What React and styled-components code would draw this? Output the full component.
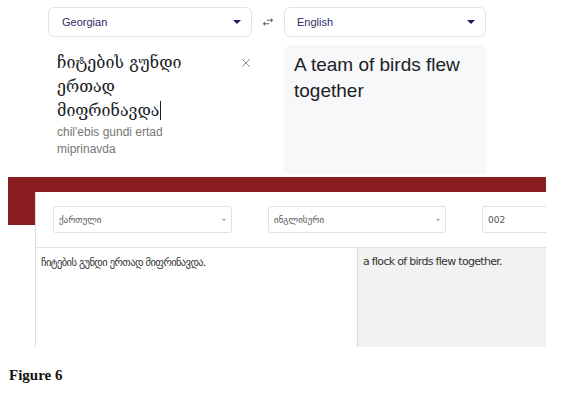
import React from "react";
import styled, { createGlobalStyle } from "styled-components";
import { X } from "lucide-react";

const GlobalStyle = createGlobalStyle`
  html, body {
    margin: 0;
    background: #ffffff;
  }
  body {
    padding: 7px 8px 8px;
    font-family: "Liberation Sans", Arial, sans-serif;
  }
`;

const Translator = styled.div`
  margin-left: 40px;
  width: 438px;
`;

const LangRow = styled.div`
  display: grid;
  grid-template-columns: 204px 32px 202px;
  align-items: center;
  height: 30px;
`;

const LangBox = styled.div`
  height: 30px;
  box-sizing: border-box;
  border: 1px solid #e3e4e8;
  border-radius: 6px;
  display: flex;
  align-items: center;
  justify-content: space-between;
  padding: 0 10px 0 ${({ $pad }) => $pad}px;
  font-size: 11px;
  color: #2f2b6c;
`;

const Caret = styled.span`
  width: 0;
  height: 0;
  border-left: ${({ $size }) => $size || 4}px solid transparent;
  border-right: ${({ $size }) => $size || 4}px solid transparent;
  border-top: ${({ $size }) => $size || 4}px solid ${({ $color }) => $color || "#1f1b62"};
`;

const SwapBtn = styled.div`
  display: flex;
  justify-content: center;
  align-items: center;
  color: #5f6368;
`;

const IOArea = styled.div`
  display: grid;
  grid-template-columns: 236px 202px;
  margin-top: 8px;
  height: 129px;
`;

const Source = styled.div`
  display: flex;
  justify-content: space-between;
  padding: 6px 0 0 9px;
  color: #6b6b6b;
`;

const SourceText = styled.div`
  font-family: "DejaVu Serif", "Noto Sans", serif;
  font-size: 16px;
  line-height: 24px;
  color: #202124;
`;

const Cursor = styled.span`
  display: inline-block;
  width: 1px;
  height: 19px;
  margin-left: 1px;
  background: #202124;
  vertical-align: -4px;
`;

const Roman = styled.div`
  font-size: 12px;
  line-height: 17px;
  color: #777;
  margin-top: 1px;
`;

const CloseBtn = styled.div`
  padding: 5px 31px 0 0;
  color: #6d6f72;
`;

const Target = styled.div`
  background: #f7f8f9;
  border-radius: 6px 6px 0 0;
  padding: 7px 10px;
  font-size: 19px;
  line-height: 26px;
  color: #202124;
`;

const Site = styled.div`
  margin-top: 3px;
  width: 538px;
`;

const Band = styled.div`
  height: 48px;
  background: #8a1d20;
`;

const Card = styled.div`
  position: relative;
  margin: -33px 0 0 27px;
  height: 155px;
  background: #ffffff;
  border-left: 1px solid #dcdcdc;
  overflow: hidden;
  display: flex;
  flex-direction: column;
`;

const Toolbar = styled.div`
  display: grid;
  grid-template-columns: 179px 178px 80px;
  column-gap: 36px;
  padding: 14px 0 14px 17px;
  border-bottom: 1px solid #e2e2e2;
`;

const Select = styled.div`
  height: 27px;
  box-sizing: border-box;
  border: 1px solid #e0e0e0;
  border-radius: 3px;
  display: flex;
  align-items: center;
  justify-content: space-between;
  padding: 0 5px 0 5px;
  font-family: "DejaVu Sans", "Liberation Sans", sans-serif;
  font-size: 9px;
  color: #555;
`;

const Panels = styled.div`
  flex: 1;
  display: grid;
  grid-template-columns: 321px 1fr;
`;

const Panel = styled.div`
  padding: 6px 5px;
  font-family: "DejaVu Sans", sans-serif;
  font-size: ${({ $shade }) => ($shade ? 11 : 10.5)}px;
  letter-spacing: ${({ $shade }) => ($shade ? -0.7 : -0.6)}px;
  line-height: 16px;
  color: #333;
  background: ${({ $shade }) => ($shade ? "#f2f2f2" : "#ffffff")};
  border-left: ${({ $shade }) => ($shade ? "1px solid #dcdcdc" : "none")};
`;

const Caption = styled.div`
  margin: 20px 0 0 1px;
  font-family: "Liberation Serif", "Times New Roman", serif;
  font-weight: bold;
  font-size: 15px;
  line-height: 16px;
  color: #111;
`;

const SwapIcon = () => (
  <svg width="14" height="14" viewBox="0 0 24 24" fill="currentColor">
    <path d="M6.99 11L3 15l3.99 4v-3H14v-2H6.99v-3zM21 9l-3.99-4v3H10v2h7.01v3L21 9z" />
  </svg>
);

export default function App() {
  return (
    <>
      <GlobalStyle />
      <Translator>
        <LangRow>
          <LangBox $pad={13}>
            Georgian
            <Caret />
          </LangBox>
          <SwapBtn>
            <SwapIcon />
          </SwapBtn>
          <LangBox $pad={12}>
            English
            <Caret />
          </LangBox>
        </LangRow>
        <IOArea>
          <Source>
            <div>
              <SourceText>
                ჩიტების გუნდი
                <br />
                ერთად
                <br />
                მიფრინავდა
                <Cursor />
              </SourceText>
              <Roman>
                chil'ebis gundi ertad
                <br />
                miprinavda
              </Roman>
            </div>
            <CloseBtn>
              <X size={14} strokeWidth={1.4} />
            </CloseBtn>
          </Source>
          <Target>
            A team of birds flew
            <br />
            together
          </Target>
        </IOArea>
      </Translator>
      <Site>
        <Band />
        <Card>
          <Toolbar>
            <Select>
              ქართული
              <Caret $size={2} $color="#9a9a9a" />
            </Select>
            <Select>
              ინგლისური
              <Caret $size={2} $color="#9a9a9a" />
            </Select>
            <Select>002</Select>
          </Toolbar>
          <Panels>
            <Panel>ჩიტების გუნდი ერთად მიფრინავდა.</Panel>
            <Panel $shade>a flock of birds flew together.</Panel>
          </Panels>
        </Card>
      </Site>
      <Caption>Figure 6</Caption>
    </>
  );
}
